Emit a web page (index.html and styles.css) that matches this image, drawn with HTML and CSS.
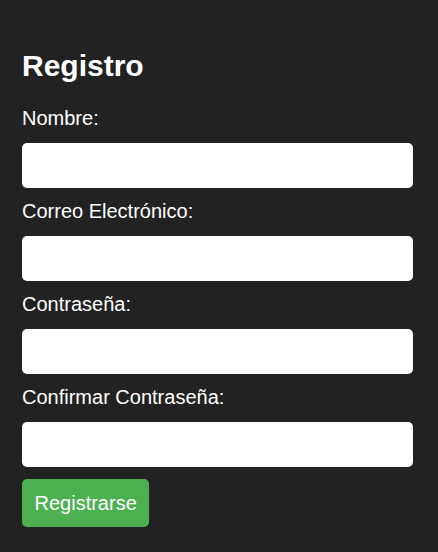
FILE: index.html
```html
<!DOCTYPE html>
<html lang="es">
<head>
<meta charset="utf-8">
<title>Registro</title>
<link rel="stylesheet" href="styles.css">
</head>
<body>
<div class="container">
  <h2 class="title">Registro</h2>
  <form class="form">
    <label class="label" for="nombre">Nombre:</label>
    <input class="input" type="text" id="nombre">
    <label class="label" for="correo">Correo Electrónico:</label>
    <input class="input" type="email" id="correo">
    <label class="label" for="pass">Contraseña:</label>
    <input class="input" type="password" id="pass">
    <label class="label" for="pass2">Confirmar Contraseña:</label>
    <input class="input" type="password" id="pass2">
    <button class="button" type="button">Registrarse</button>
  </form>
</div>
</body>
</html>
```

FILE: styles.css
```css
html, body {
  margin: 0;
  padding: 0;
  background: #222222;
  height: 100%;
}
body {
  font-family: "Liberation Sans", Arial, sans-serif;
  color: #ffffff;
}
.container {
  padding: 49px 25px 0 22px;
}
.title {
  margin: 0 0 24px;
  font-size: 30px;
  line-height: 34px;
  font-weight: bold;
}
.form {
  display: flex;
  flex-direction: column;
  align-items: stretch;
}
.label {
  display: block;
  font-size: 20px;
  line-height: 23px;
  margin-bottom: 13px;
}
.input {
  display: block;
  box-sizing: border-box;
  height: 45px;
  margin: 0 0 12px;
  border: none;
  border-radius: 5px;
  background: #ffffff;
  font-size: 20px;
  padding: 0 12px;
}
.button {
  align-self: flex-start;
  box-sizing: border-box;
  height: 48px;
  padding: 0 12.5px;
  border: none;
  border-radius: 5px;
  background: #4caf50;
  color: #ffffff;
  font-family: "Liberation Sans", Arial, sans-serif;
  font-size: 20px;
  line-height: 24px;
}
```
